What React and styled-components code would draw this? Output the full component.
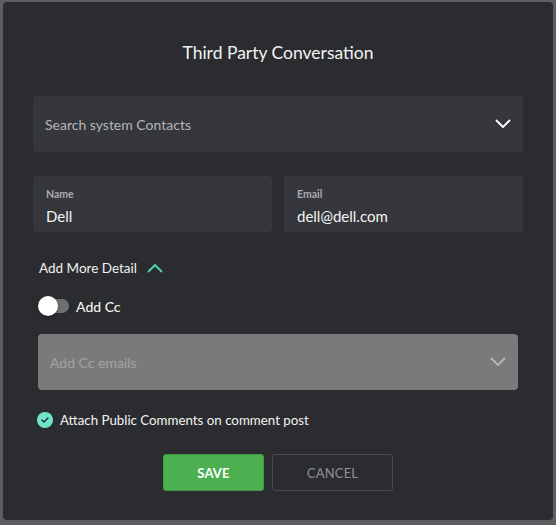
import React, { useState } from 'react';
import styled, { createGlobalStyle } from 'styled-components';

const Global = createGlobalStyle`
  html, body {
    margin: 0;
    padding: 0;
    background: #5d5e62;
    font-family: Lato, "Open Sans", sans-serif;
  }
  * { box-sizing: border-box; }
`;

const Page = styled.div`
  width: 556px;
  height: 525px;
  padding: 2px 3px 5px 3px;
`;

const Modal = styled.div`
  width: 550px;
  height: 518px;
  background: #2b2c30;
  border-radius: 4px;
  padding: 0 30px;
  display: flex;
  flex-direction: column;
`;

const Title = styled.h2`
  margin: 39px 0 0;
  height: 24px;
  font-size: 17.5px;
  font-weight: 400;
  line-height: 24px;
  color: #f2f2f2;
  text-align: center;
`;

const Select = styled.div`
  margin: ${p => p.$inset ? '0 5px' : '0'};
  margin-top: ${p => p.$top}px;
  height: 56px;
  border-radius: 4px;
  background: ${p => p.$disabled ? '#7a7a7a' : '#35373c'};
  display: flex;
  align-items: center;
  justify-content: space-between;
  padding: 0 12px;
  font-size: 14px;
  color: ${p => p.$disabled ? '#a3a3a3' : '#b4b6ba'};
`;

const Chevron = ({ up, color = '#fff' }) => (
  <svg width="16" height="10" viewBox="0 0 16 10" fill="none">
    <path
      d={up ? 'M1.5 8.5 L8 2 L14.5 8.5' : 'M1.5 1.5 L8 8 L14.5 1.5'}
      stroke={color}
      strokeWidth="1.8"
      strokeLinecap="round"
      strokeLinejoin="round"
    />
  </svg>
);

const Row = styled.div`
  margin-top: 24px;
  display: grid;
  grid-template-columns: 1fr 1fr;
  gap: 12px;
`;

const Field = styled.div`
  height: 56px;
  border-radius: 4px;
  background: #35373c;
  padding: 11px 13px 0;
`;

const Label = styled.div`
  font-size: 10.5px;
  font-weight: 700;
  line-height: 14px;
  color: #a9abae;
`;

const Value = styled.div`
  margin-top: 6px;
  font-size: 15px;
  line-height: 18px;
  color: #f4f4f4;
`;

const DetailToggle = styled.div`
  margin: 27px 0 0 6px;
  display: flex;
  align-items: center;
  gap: 10px;
  font-size: 13.5px;
  color: #f2f2f2;
  height: 18px;
`;

const SwitchRow = styled.div`
  margin: 19px 0 0 5px;
  display: flex;
  align-items: center;
  gap: 7px;
  height: 20px;
  font-size: 14px;
  font-weight: 500;
  color: #f2f2f2;
`;

const Track = styled.div`
  position: relative;
  width: 31px;
  height: 20px;
  display: flex;
  align-items: center;
  &::before {
    content: '';
    margin-left: 4px;
    width: 27px;
    height: 14px;
    border-radius: 7px;
    background: #707070;
  }
`;

const Thumb = styled.span`
  position: absolute;
  left: 0;
  top: 0;
  width: 20px;
  height: 20px;
  border-radius: 50%;
  background: #ffffff;
  box-shadow: 0 1px 2px rgba(0,0,0,0.4);
`;

const CheckRow = styled.div`
  margin: 22px 0 0 4px;
  display: flex;
  align-items: center;
  gap: 7px;
  font-size: 13.3px;
  color: #f2f2f2;
  height: 16px;
`;

const CheckDot = styled.span`
  width: 16px;
  height: 16px;
  border-radius: 50%;
  background: #6ee6cc;
  display: flex;
  align-items: center;
  justify-content: center;
`;

const Actions = styled.div`
  margin-top: 26px;
  display: flex;
  justify-content: center;
  gap: 8px;
`;

const Button = styled.button`
  height: 37px;
  width: ${p => p.$w}px;
  border-radius: 3px;
  font-family: inherit;
  font-size: 13px;
  font-weight: ${p => p.$primary ? 700 : 400};
  letter-spacing: 0.2px;
  color: ${p => p.$primary ? '#ffffff' : '#8f9093'};
  background: ${p => p.$primary ? '#4caf50' : 'transparent'};
  border: 1px solid ${p => p.$primary ? '#3f9a43' : '#4a4b50'};
`;

export default function App() {
  const [open] = useState(true);
  return (
    <>
      <Global />
      <Page>
        <Modal>
          <Title>Third Party Conversation</Title>
          <Select $top={31}>
            <span>Search system Contacts</span>
            <Chevron />
          </Select>
          <Row>
            <Field>
              <Label>Name</Label>
              <Value>Dell</Value>
            </Field>
            <Field>
              <Label>Email</Label>
              <Value>dell@dell.com</Value>
            </Field>
          </Row>
          <DetailToggle>
            <span>Add More Detail</span>
            <Chevron up={open} color="#4fd6b6" />
          </DetailToggle>
          <SwitchRow>
            <Track><Thumb /></Track>
            <span>Add Cc</span>
          </SwitchRow>
          <Select $top={18} $inset $disabled>
            <span>Add Cc emails</span>
            <Chevron color="#b8b8b8" />
          </Select>
          <CheckRow>
            <CheckDot>
              <svg width="8" height="6" viewBox="0 0 8 6" fill="none">
                <path d="M1 3 L3 5 L7 1" stroke="#1f2a28" strokeWidth="1.4" strokeLinecap="round" strokeLinejoin="round" />
              </svg>
            </CheckDot>
            <span>Attach Public Comments on comment post</span>
          </CheckRow>
          <Actions>
            <Button $primary $w={101}>SAVE</Button>
            <Button $w={121}>CANCEL</Button>
          </Actions>
        </Modal>
      </Page>
    </>
  );
}
